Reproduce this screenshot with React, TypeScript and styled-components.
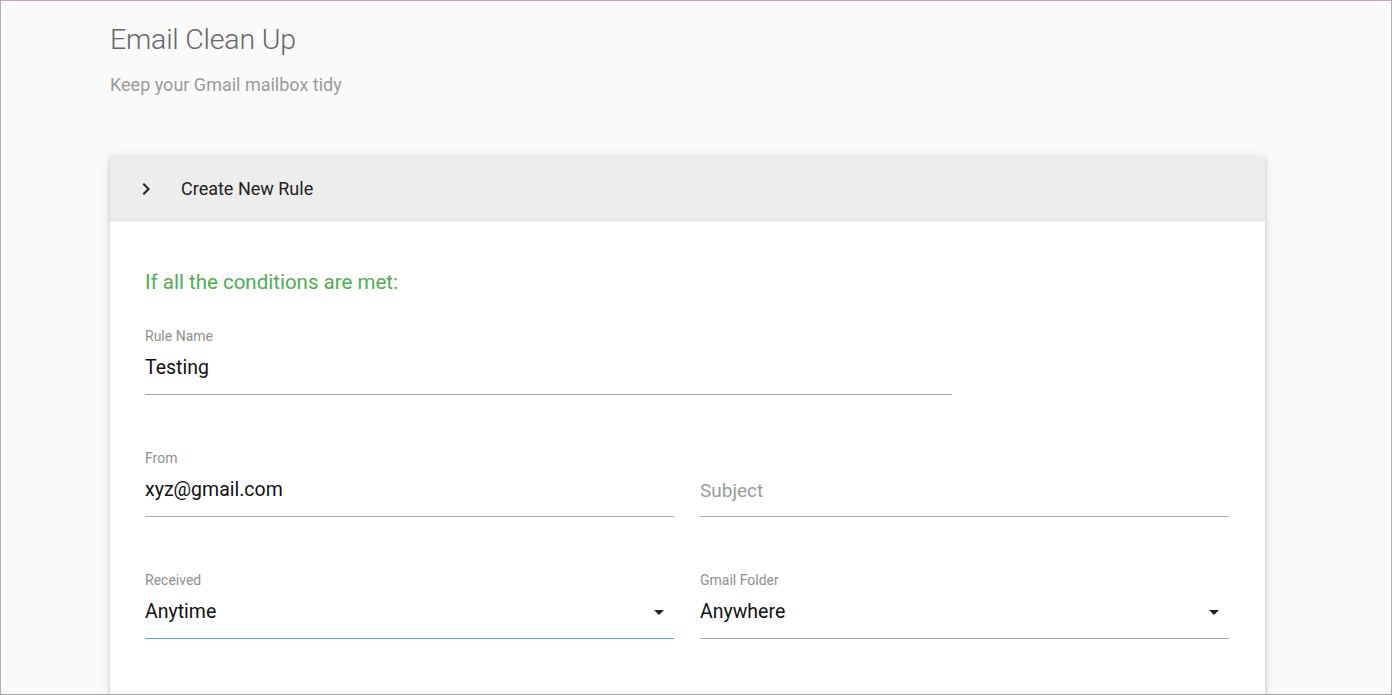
import styled, { createGlobalStyle } from 'styled-components';

const GlobalStyle = createGlobalStyle`
  html, body {
    margin: 0;
    padding: 0;
    background: #fafafa;
  }
  * {
    box-sizing: border-box;
  }
`;

const Frame = styled.div`
  width: 1392px;
  height: 695px;
  overflow: hidden;
  border: 1px solid #bfa8bf;
  border-bottom-color: #a3a3a3;
  background: #fafafa;
  padding: 21px 126px 0 109px;
  font-family: Roboto, 'Liberation Sans', Arial, sans-serif;
`;

const Title = styled.h1`
  margin: 0;
  font-size: 28.5px;
  line-height: 36px;
  font-weight: 300;
  letter-spacing: -0.2px;
  color: #666666;
`;

const Subtitle = styled.p`
  margin: 15px 0 0;
  font-size: 18px;
  line-height: 24px;
  font-weight: 400;
  color: #9a9a9a;
`;

const Card = styled.section`
  margin-top: 60px;
  width: 1155px;
  background: #ffffff;
  box-shadow: 0 2px 4px rgba(0, 0, 0, 0.14), 0 1px 10px rgba(0, 0, 0, 0.12);
`;

const CardHeader = styled.div`
  display: flex;
  align-items: center;
  gap: 23px;
  height: 64px;
  padding-left: 24px;
  background: #ededed;
  border-bottom: 1px solid #e0e0e0;
  color: #212121;
  font-size: 18px;
`;

const CardBody = styled.div`
  padding: 47px 36px 80px 35px;
  min-height: 520px;
`;

const Heading = styled.h2`
  margin: 0 0 32px;
  font-size: 20.5px;
  line-height: 28px;
  font-weight: 400;
  color: #4caf50;
`;

const Row = styled.div<{ $cols: number }>`
  display: grid;
  grid-template-columns: ${({ $cols }) => ($cols === 2 ? '1fr 1fr' : '807px')};
  column-gap: 26px;
  margin-bottom: 55px;
`;

const Field = styled.div`
  display: flex;
  flex-direction: column;
`;

const Label = styled.label`
  height: 16px;
  font-size: 14px;
  line-height: 16px;
  color: #8f8f8f;
`;

const InputLine = styled.div<{ $focused?: boolean }>`
  display: flex;
  align-items: center;
  justify-content: space-between;
  padding: 11px 0 13px;
  height: 51px;
  border-bottom: 1px solid ${({ $focused }) => ($focused ? '#4fb3a9' : '#a8a8a8')};
  font-size: 19.5px;
  line-height: 26px;
  color: #111111;
`;

const Placeholder = styled.span`
  font-size: 19px;
  color: #9a9a9a;
  transform: translateY(1px);
`;

const Arrow = styled.svg`
  width: 24px;
  height: 24px;
  margin-right: 3px;
  fill: #1f1f1f;
`;

const ChevronIcon = () => (
  <svg width="24" height="24" viewBox="0 0 24 24" fill="#222">
    <path d="M10 6L8.59 7.41 13.17 12l-4.58 4.59L10 18l6-6z" />
  </svg>
);

const DropArrow = () => (
  <Arrow viewBox="0 0 24 24">
    <path d="M7 10l5 5 5-5z" />
  </Arrow>
);

export default function App() {
  return (
    <>
      <GlobalStyle />
      <Frame>
        <Title>Email Clean Up</Title>
        <Subtitle>Keep your Gmail mailbox tidy</Subtitle>

        <Card>
          <CardHeader>
            <ChevronIcon />
            <span>Create New Rule</span>
          </CardHeader>
          <CardBody>
            <Heading>If all the conditions are met:</Heading>

            <Row $cols={1}>
              <Field>
                <Label>Rule Name</Label>
                <InputLine>Testing</InputLine>
              </Field>
            </Row>

            <Row $cols={2}>
              <Field>
                <Label>From</Label>
                <InputLine>xyz@gmail.com</InputLine>
              </Field>
              <Field>
                <Label />
                <InputLine>
                  <Placeholder>Subject</Placeholder>
                </InputLine>
              </Field>
            </Row>

            <Row $cols={2}>
              <Field>
                <Label>Received</Label>
                <InputLine $focused>
                  <span>Anytime</span>
                  <DropArrow />
                </InputLine>
              </Field>
              <Field>
                <Label>Gmail Folder</Label>
                <InputLine>
                  <span>Anywhere</span>
                  <DropArrow />
                </InputLine>
              </Field>
            </Row>
          </CardBody>
        </Card>
      </Frame>
    </>
  );
}
